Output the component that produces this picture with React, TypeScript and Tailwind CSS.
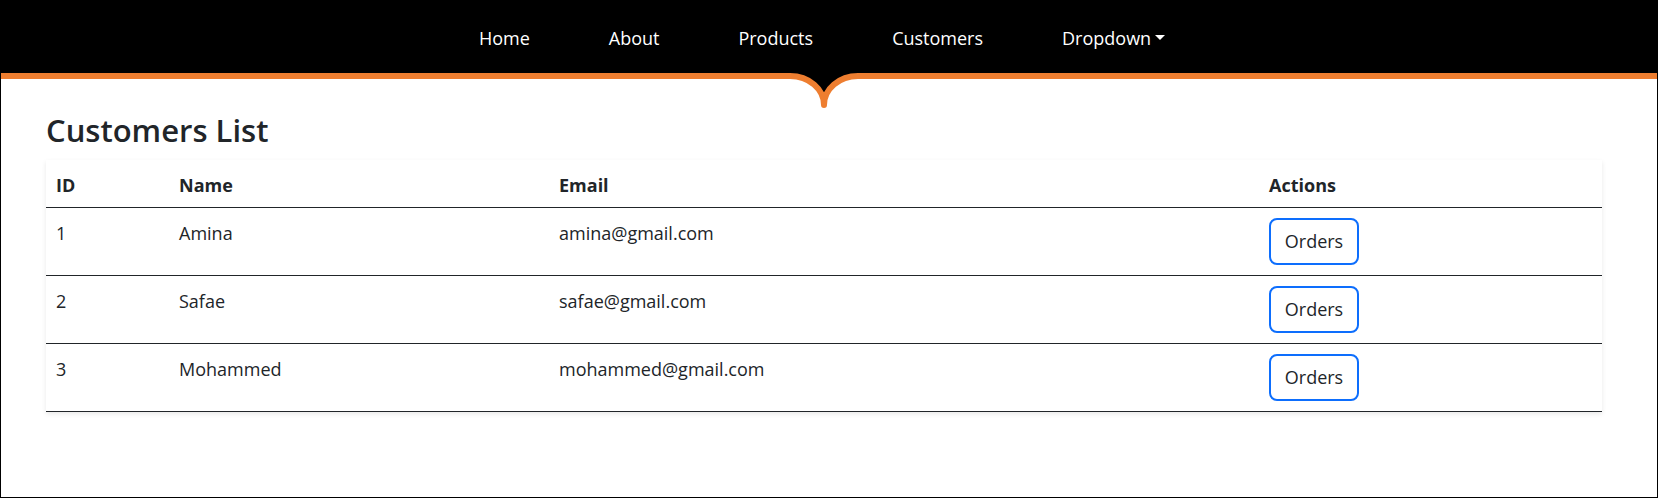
import { useState } from "react";

interface Customer {
  id: number;
  name: string;
  email: string;
}

const customers: Customer[] = [
  { id: 1, name: "Amina", email: "amina@gmail.com" },
  { id: 2, name: "Safae", email: "safae@gmail.com" },
  { id: 3, name: "Mohammed", email: "mohammed@gmail.com" },
];

const links = ["Home", "About", "Products", "Customers"];

const Navbar = () => {
  const [open, setOpen] = useState(false);

  return (
    <nav className="relative">
      <div className="h-[73px] bg-black flex items-center justify-center pt-[3px] pr-[14px]">
        <ul className="flex items-center gap-[79px] text-white text-[18px] leading-[27px]">
          {links.map((link) => (
            <li key={link}>
              <a href="#">{link}</a>
            </li>
          ))}
          <li>
            <button
              type="button"
              onClick={() => setOpen((prev) => !prev)}
              className="flex items-center text-white"
            >
              Dropdown
              <span className="ml-[4px] mb-[2px] border-t-[5px] border-x-[5px] border-t-white border-x-transparent" />
            </button>
          </li>
        </ul>
      </div>
      <div className="h-[6px] bg-[#ee7e30]" />
      {/* notch under the middle of the bar */}
      <svg
        className="absolute left-[773px] top-[68px]"
        width="100"
        height="44"
        viewBox="773 68 100 44"
      >
        <path
          d="M773 68 H873 V76 H857 A34 29 0 0 0 823 105 A34 29 0 0 0 789 76 H773 Z"
          fill="#000"
        />
        <path
          d="M773 76 H789 A34 29 0 0 1 823 105 A34 29 0 0 1 857 76 H873"
          fill="none"
          stroke="#ee7e30"
          strokeWidth="6"
          strokeLinejoin="round"
        />
      </svg>
      {open && (
        <div className="absolute left-[1040px] top-[70px] bg-white border border-gray-300 rounded py-2 w-40 shadow z-10">
          <a href="#" className="block px-4 py-1">Action</a>
        </div>
      )}
    </nav>
  );
};

const CustomersTable = () => {
  return (
    <table className="w-[1556px] table-fixed bg-white shadow-[0_2px_5px_rgba(0,0,0,0.09)] text-[18px] text-[#212529]">
      <colgroup>
        <col className="w-[123px]" />
        <col className="w-[380px]" />
        <col className="w-[710px]" />
        <col className="w-[343px]" />
      </colgroup>
      <thead>
        <tr className="border-b border-[#212529] text-left">
          <th className="pl-[10px] pt-[10px] pb-[7px] leading-[30px] font-bold">ID</th>
          <th className="pl-[10px] pt-[10px] pb-[7px] leading-[30px] font-bold">Name</th>
          <th className="pl-[10px] pt-[10px] pb-[7px] leading-[30px] font-bold">Email</th>
          <th className="pl-[10px] pt-[10px] pb-[7px] leading-[30px] font-bold">Actions</th>
        </tr>
      </thead>
      <tbody>
        {customers.map((c) => (
          <tr key={c.id} className="border-b border-[#212529] align-top">
            <td className="px-[10px] py-[10px] leading-[30px]">{c.id}</td>
            <td className="px-[10px] py-[10px] leading-[30px]">{c.name}</td>
            <td className="px-[10px] py-[10px] leading-[30px]">{c.email}</td>
            <td className="px-[10px] py-[10px]">
              <button
                type="button"
                className="w-[90px] h-[47px] border-2 border-[#0d6efd] rounded-[8px] text-[#212529] text-[18px] bg-white"
              >
                Orders
              </button>
            </td>
          </tr>
        ))}
      </tbody>
    </table>
  );
};

export default function App() {
  return (
    <div className="h-[498px] border-x border-b border-black bg-white font-['Open_Sans',sans-serif] text-[#212529] overflow-hidden">
      <Navbar />
      <main className="pl-[45px] pr-[55px]">
        <h2 className="mt-[33px] mb-[11px] text-[31px] leading-[37px] font-semibold">Customers List</h2>
        <CustomersTable />
      </main>
    </div>
  );
}
